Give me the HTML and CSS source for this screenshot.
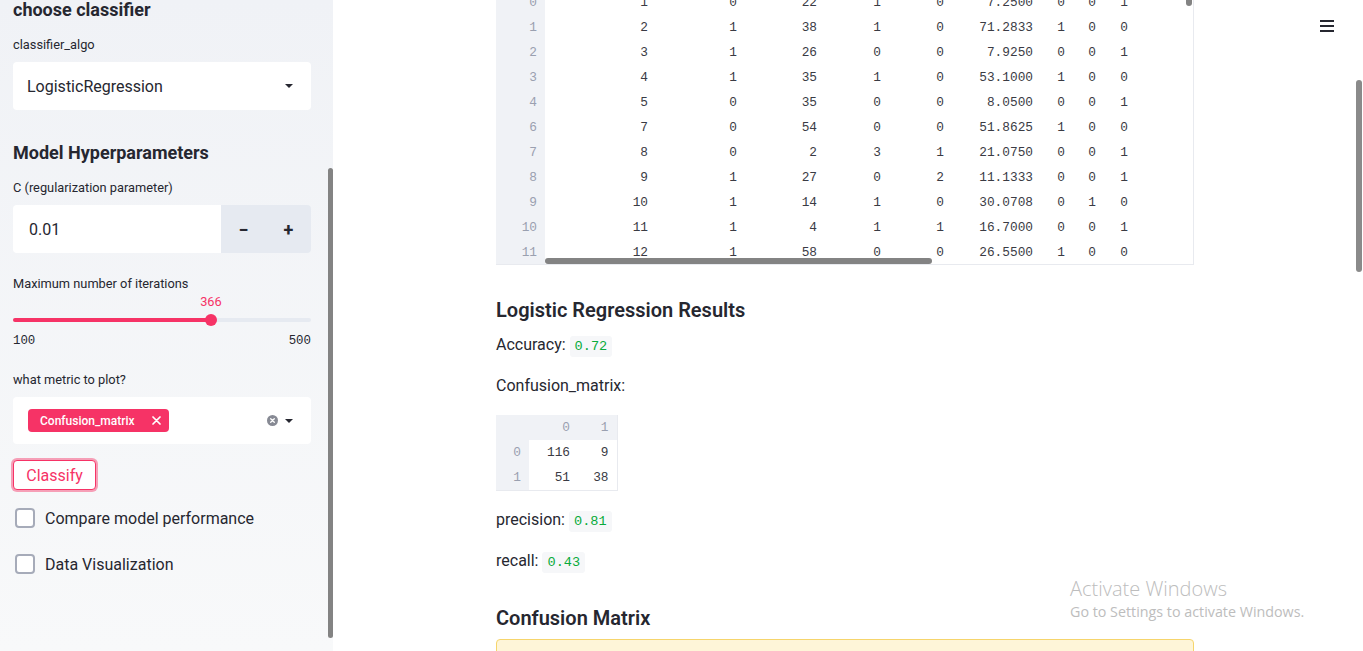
FILE: index.html
```html
<!DOCTYPE html>
<html lang="en">
<head>
<meta charset="utf-8">
<title>Classifier</title>
<link rel="stylesheet" href="styles.css">
</head>
<body>
<div class="app">
  <aside class="sidebar">
    <h2 class="side-h">choose classifier</h2>
    <div class="wlabel lab1">classifier_algo</div>
    <div class="select">
      <span>LogisticRegression</span>
      <span class="caret"></span>
    </div>

    <h2 class="side-h h-model">Model Hyperparameters</h2>
    <div class="wlabel lab2">C (regularization parameter)</div>
    <div class="number">
      <div class="num-val">0.01</div>
      <div class="num-btn">&minus;</div>
      <div class="num-btn">+</div>
    </div>

    <div class="wlabel lab3">Maximum number of iterations</div>
    <div class="slider" style="--p: 66.5%">
      <div class="slider-val">366</div>
      <div class="track"><div class="fill"></div><div class="thumb"></div></div>
      <div class="ticks"><span>100</span><span>500</span></div>
    </div>

    <div class="wlabel lab4">what metric to plot?</div>
    <div class="multi">
      <div class="tag">
        <span>Confusion_matrix</span>
        <svg class="tag-x" width="9" height="9" viewBox="0 0 9 9"><path d="M1 1L8 8M8 1L1 8" stroke="#fff" stroke-width="1.7" stroke-linecap="round"/></svg>
      </div>
      <div class="multi-icons">
        <svg width="11" height="11" viewBox="0 0 11 11"><circle cx="5.5" cy="5.5" r="5.5" fill="#878a94"/><path d="M3.7 3.7L7.3 7.3M7.3 3.7L3.7 7.3" stroke="#fff" stroke-width="1.3" stroke-linecap="round"/></svg>
        <span class="caret"></span>
      </div>
    </div>

    <button class="classify">Classify</button>

    <label class="check cb1"><span class="box"></span><span>Compare model performance</span></label>
    <label class="check cb2"><span class="box"></span><span>Data Visualization</span></label>

    <div class="side-scroll"></div>
  </aside>

  <main class="main">
    <div class="content">
      <div class="df">
        <table class="df-table">
          <colgroup>
            <col style="width:49px"><col style="width:111px"><col style="width:89px"><col style="width:80px"><col style="width:64px"><col style="width:63px"><col style="width:89px"><col style="width:32px"><col style="width:31px"><col style="width:32px">
          </colgroup>
          <tbody>
            <tr><th>0</th><td>1</td><td>0</td><td>22</td><td>1</td><td>0</td><td>7.2500</td><td>0</td><td>0</td><td>1</td></tr>
            <tr><th>1</th><td>2</td><td>1</td><td>38</td><td>1</td><td>0</td><td>71.2833</td><td>1</td><td>0</td><td>0</td></tr>
            <tr><th>2</th><td>3</td><td>1</td><td>26</td><td>0</td><td>0</td><td>7.9250</td><td>0</td><td>0</td><td>1</td></tr>
            <tr><th>3</th><td>4</td><td>1</td><td>35</td><td>1</td><td>0</td><td>53.1000</td><td>1</td><td>0</td><td>0</td></tr>
            <tr><th>4</th><td>5</td><td>0</td><td>35</td><td>0</td><td>0</td><td>8.0500</td><td>0</td><td>0</td><td>1</td></tr>
            <tr><th>6</th><td>7</td><td>0</td><td>54</td><td>0</td><td>0</td><td>51.8625</td><td>1</td><td>0</td><td>0</td></tr>
            <tr><th>7</th><td>8</td><td>0</td><td>2</td><td>3</td><td>1</td><td>21.0750</td><td>0</td><td>0</td><td>1</td></tr>
            <tr><th>8</th><td>9</td><td>1</td><td>27</td><td>0</td><td>2</td><td>11.1333</td><td>0</td><td>0</td><td>1</td></tr>
            <tr><th>9</th><td>10</td><td>1</td><td>14</td><td>1</td><td>0</td><td>30.0708</td><td>0</td><td>1</td><td>0</td></tr>
            <tr><th>10</th><td>11</td><td>1</td><td>4</td><td>1</td><td>1</td><td>16.7000</td><td>0</td><td>0</td><td>1</td></tr>
            <tr><th>11</th><td>12</td><td>1</td><td>58</td><td>0</td><td>0</td><td>26.5500</td><td>1</td><td>0</td><td>0</td></tr>
          </tbody>
        </table>
        <div class="df-hscroll"></div>
        <div class="df-vscroll"></div>
      </div>

      <h3 class="res-h">Logistic Regression Results</h3>
      <p class="line acc">Accuracy: <code>0.72</code></p>
      <p class="line cm-label">Confusion_matrix:</p>
      <table class="cm">
        <colgroup><col style="width:33px"><col style="width:49px"><col style="width:39px"></colgroup>
        <thead><tr><th></th><th>0</th><th>1</th></tr></thead>
        <tbody>
          <tr><th>0</th><td>116</td><td>9</td></tr>
          <tr><th>1</th><td>51</td><td>38</td></tr>
        </tbody>
      </table>
      <p class="line prec">precision: <code>0.81</code></p>
      <p class="line rec">recall: <code>0.43</code></p>
      <h3 class="res-h cm-h">Confusion Matrix</h3>
      <div class="alert"></div>
    </div>

    <div class="menu">
      <svg width="14" height="12" viewBox="0 0 14 12"><path d="M0 1H14M0 6H14M0 11H14" stroke="#262730" stroke-width="1.8"/></svg>
    </div>
    <div class="page-scroll"></div>
    <div class="watermark">
      <div class="wm1">Activate Windows</div>
      <div class="wm2">Go to Settings to activate Windows.</div>
    </div>
  </main>
</div>
</body>
</html>
```
FILE: styles.css
```css
* { box-sizing: border-box; }
html, body { margin: 0; height: 100%; overflow: hidden; }
body {
  font-family: Roboto, "Liberation Sans", sans-serif;
  color: #262730;
  background: #fff;
}
.app { display: flex; height: 651px; }

/* Sidebar */
.sidebar {
  width: 333px;
  flex: none;
  height: 651px;
  background: linear-gradient(180deg, #f0f2f6 0%, #f8f9fa 100%);
  padding: 0 22px 0 13px;
  position: relative;
}
.side-h { margin: 0; font-size: 18px; font-weight: 700; line-height: 20px; }
.wlabel { font-size: 12.8px; line-height: 16px; }
.lab1 { margin-top: 17px; }
.select {
  margin-top: 9px;
  height: 48px;
  background: #fff;
  border-radius: 4px;
  display: flex;
  align-items: center;
  justify-content: space-between;
  padding: 0 18px 0 14px;
  font-size: 16px;
}
.caret {
  width: 0; height: 0;
  border-left: 4px solid transparent;
  border-right: 4px solid transparent;
  border-top: 4px solid #262730;
}
.h-model { margin-top: 33px; }
.lab2 { margin-top: 17px; }
.number { margin-top: 9px; height: 48px; display: flex; border-radius: 4px; overflow: hidden; }
.num-val { flex: 1; background: #fff; padding-left: 16px; display: flex; align-items: center; font-size: 16px; }
.num-btn {
  width: 45px; background: #e6eaf1;
  display: flex; align-items: center; justify-content: center;
  font-size: 18px; font-weight: 700;
}
.lab3 { margin-top: 23px; }
.slider-val {
  margin-top: 3px;
  font-size: 12.8px; line-height: 14px;
  color: #f63366;
  padding-left: calc(var(--p) - 11px);
}
.track {
  margin-top: 9px;
  height: 4px;
  background: #e6eaf1;
  border-radius: 2px;
  display: flex;
  align-items: center;
}
.fill { height: 4px; width: var(--p); background: #f63366; border-radius: 2px 0 0 2px; }
.thumb { flex: none; width: 12px; height: 12px; border-radius: 50%; background: #f63366; margin-left: -6px; }
.ticks {
  margin-top: 12px;
  display: flex; justify-content: space-between;
  font-family: "Liberation Mono", monospace;
  font-size: 12.4px; line-height: 14px;
}
.lab4 { margin-top: 24px; }
.multi {
  margin-top: 9px;
  height: 47px;
  background: #fff;
  border-radius: 4px;
  display: flex; align-items: center; justify-content: space-between;
  padding: 0 18px 0 15px;
}
.tag {
  height: 23px; width: 141px;
  background: #f63366; color: #fff;
  border-radius: 4px;
  display: flex; align-items: center; justify-content: space-between;
  padding: 0 8px 0 12px;
  font-size: 12px; font-weight: 500;
}
.multi-icons { display: flex; align-items: center; gap: 7px; }
.classify {
  margin-top: 16px;
  width: 83px; height: 30px;
  background: #fff;
  border: 1px solid #f63366;
  border-radius: 4px;
  color: #f63366;
  font-family: inherit; font-size: 16px;
  padding: 0;
  box-shadow: 0 0 0 2px rgba(246, 51, 102, 0.45);
  display: block;
}
.check { display: flex; align-items: center; height: 24px; font-size: 16px; margin-left: 2px; }
.cb1 { margin-top: 16px; }
.cb2 { margin-top: 22px; }
.box {
  width: 20px; height: 20px;
  border: 2px solid #a6abb9;
  border-radius: 4px;
  background: #fff;
  margin-right: 10px;
}
.side-scroll {
  position: absolute; right: 0; top: 168px;
  width: 5px; height: 470px;
  background: #838383; border-radius: 3px;
}

/* Main */
.main { flex: 1; position: relative; padding-left: 163px; }
.content { width: 698px; }
.df {
  position: relative;
  height: 265px;
  overflow: hidden;
  border-right: 1px solid #e8eaef;
  border-bottom: 1px solid #e8eaef;
}
.df-table {
  margin-top: -10px;
  border-collapse: collapse;
  table-layout: fixed;
  width: 640px;
  font-family: "Liberation Mono", monospace;
  font-size: 12.8px;
}
.df-table th, .df-table td {
  height: 25px; padding: 0 8px 0 0; text-align: right; white-space: nowrap;
}
.df-table th { background: #f0f2f6; color: #9aa0b0; font-weight: 400; }
.df-table td { color: #3a3b44; }
.df-hscroll {
  position: absolute; left: 49px; bottom: 0;
  width: 387px; height: 6px;
  background: #838383; border-radius: 3px;
}
.df-vscroll {
  position: absolute; right: 1px; top: -10px;
  width: 6px; height: 16px;
  background: #838383; border-radius: 3px;
}
.res-h { margin: 33px 0 0; font-size: 20px; font-weight: 600; line-height: 24px; height: 24px; }
.line { margin: 0; font-size: 16px; line-height: 24px; height: 24px; }
.acc { margin-top: 11px; }
.cm-label { margin-top: 17px; }
.prec { margin-top: 17px; }
.rec { margin-top: 17px; }
code {
  font-family: "Liberation Mono", monospace;
  font-size: 13.6px;
  line-height: 16px;
  color: #09ab3b;
  background: #f6f7f9;
  border-radius: 3px;
  padding: 3px 5px;
}
.cm {
  margin-top: 17px;
  border-collapse: collapse;
  table-layout: fixed;
  width: 121px;
  font-family: "Liberation Mono", monospace;
  font-size: 12.8px;
  border-right: 1px solid #e8eaef;
  border-bottom: 1px solid #e8eaef;
}
.cm th, .cm td { height: 25px; padding: 0 8px 0 0; text-align: right; }
.cm th { background: #f0f2f6; color: #9aa0b0; font-weight: 400; }
.cm td { color: #3a3b44; }
.cm-h { margin-top: 33px; }
.alert {
  margin-top: 9px;
  height: 60px;
  background: #fef5d8;
  border: 1px solid #f6d56c;
  border-radius: 4px;
}
.menu { position: absolute; left: 987px; top: 20px; line-height: 0; }
.page-scroll {
  position: absolute; right: 1px; top: 80px;
  width: 6px; height: 192px;
  background: #8a8a8a; border-radius: 3px;
}
.watermark {
  position: absolute; left: 737px; top: 576px;
  font-family: "Open Sans", "Noto Sans", sans-serif;
  color: #bdbdbd;
}
.wm1 { font-size: 20px; line-height: 26px; font-weight: 300; }
.wm2 { font-size: 14.3px; line-height: 20px; font-weight: 400; }
```
